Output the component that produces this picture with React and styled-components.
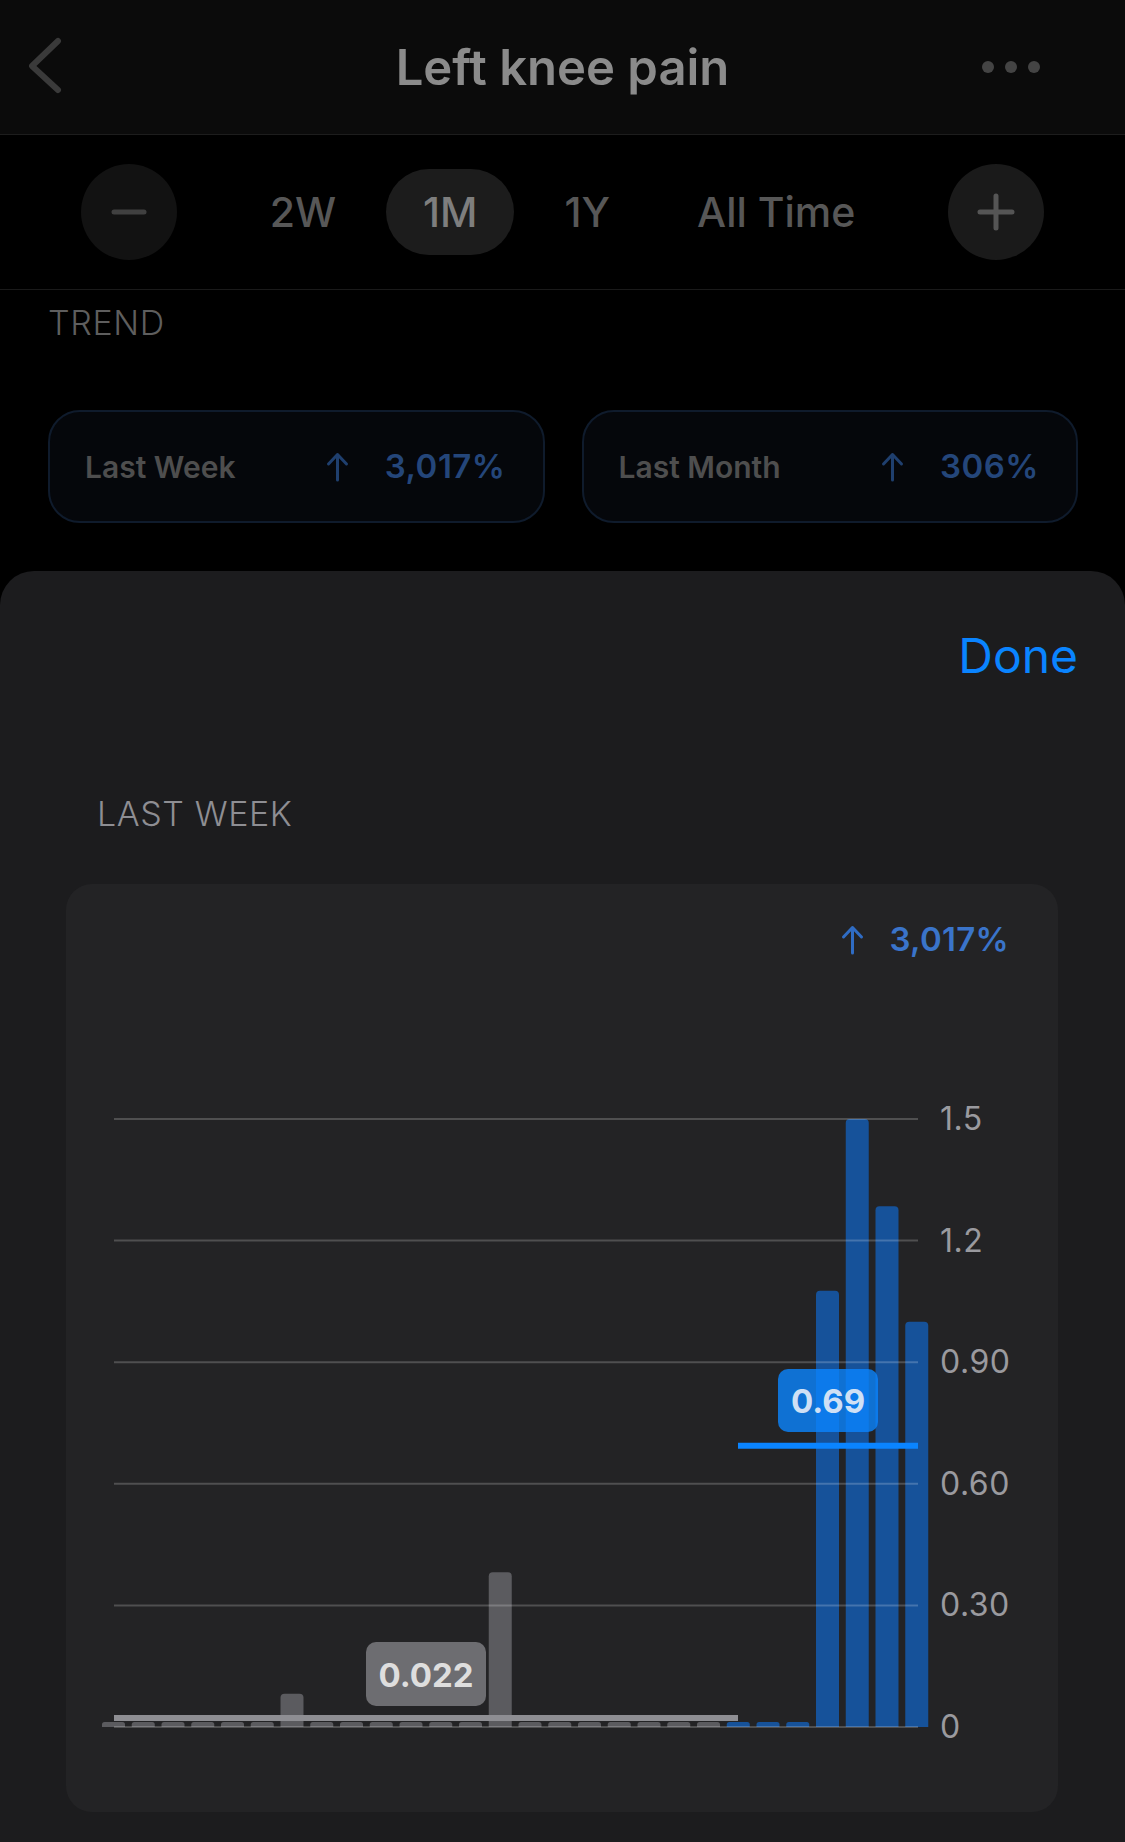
import React from 'react'
import styled, { createGlobalStyle } from 'styled-components'

const GlobalStyle = createGlobalStyle`
html, body {
  margin: 0;
  padding: 0;
  background: #000;
}
body {
  font-family: Inter, "Noto Sans", "Liberation Sans", sans-serif;
  -webkit-font-smoothing: antialiased;
}
`

const Screen = styled.div`
width: 1125px;
height: 1842px;
overflow: hidden;
display: flex;
flex-direction: column;
background: #000;
`

const NavBar = styled.header`
height: 134px;
background: #0b0b0b;
border-bottom: 1px solid #1d1d1d;
display: grid;
grid-template-columns: 1fr auto 1fr;
align-items: center;
padding: 0 85px 0 29px;
`

const NavTitle = styled.h1`
margin: 0 0 0 56px;
font-size: 49px;
line-height: 1;
font-weight: 600;
color: #8b8b8b;
`

const Dots = styled.div`
justify-self: end;
display: flex;
gap: 11px;
`

const Dot = styled.span`
width: 12px;
height: 12px;
border-radius: 50%;
background: #444;
`

const RangeBar = styled.div`
height: 154px;
border-bottom: 1px solid #1a1a1a;
display: flex;
align-items: center;
justify-content: center;
gap: 56px;
`

const RoundButton = styled.div`
width: 96px;
height: 96px;
border-radius: 50%;
background: ${({ $light }) => ($light ? '#1a1a1a' : '#121212')};
display: flex;
align-items: center;
justify-content: center;
`

const Segments = styled.div`
display: flex;
align-items: center;
gap: 13px;
`

const Segment = styled.div`
height: 86px;
padding: 0 37px;
border-radius: 43px;
display: flex;
align-items: center;
font-size: 41px;
font-weight: 500;
color: ${({ $active }) => ($active ? '#7e7e7e' : '#575757')};
background: ${({ $active }) => ($active ? '#1c1c1c' : 'transparent')};
`

const TrendSection = styled.section`
padding: 16px 47px 48px 48px;
`

const SectionLabel = styled.div`
font-size: 34px;
line-height: 1;
font-weight: 300;
letter-spacing: 0.6px;
color: ${({ $color }) => $color || '#5e5e5e'};
margin-left: ${({ $indent }) => $indent || 0}px;
`

const TrendCards = styled.div`
margin-top: 70px;
display: grid;
grid-template-columns: 1fr 1fr;
gap: 37px;
`

const TrendCard = styled.div`
height: 113px;
box-sizing: border-box;
border: 2px solid #0f1b2c;
border-radius: 32px;
background: #05070b;
display: flex;
align-items: center;
padding: 0 37px 0 35px;
`

const CardLabel = styled.span`
flex: 1;
font-size: 30px;
font-weight: 600;
color: #4e4e4e;
`

const Change = styled.span`
display: flex;
align-items: center;
gap: ${({ $gap }) => $gap || 32}px;
font-size: ${({ $size }) => $size || 30}px;
letter-spacing: ${({ $spacing }) => $spacing || 0}px;
line-height: 1;
font-weight: 600;
color: ${({ $color }) => $color};
`

const Sheet = styled.div`
flex: 1;
background: #1c1c1e;
border-radius: 34px 34px 0 0;
padding: 61px 47px 0 0;
display: flex;
flex-direction: column;
`

const DoneButton = styled.div`
align-self: flex-end;
font-size: 48px;
line-height: 1;
font-weight: 400;
color: #0a84ff;
`

const LabelRow = styled.div`
margin-top: 117px;
`

const ChartCard = styled.div`
margin: 53px 20px 0 66px;
background: #232325;
border-radius: 26px;
padding: 39px 0 48px;
`

const ChartHeader = styled.div`
display: flex;
justify-content: flex-end;
padding-right: 49px;
`

const ChartSvg = styled.svg`
display: block;
margin-top: 108px;
`

function ArrowUp({ color, width = 27, height = 30, stroke = 3 }) {
  return (
    <svg width={width} height={height} viewBox="0 0 27 30" fill="none">
      <path d="M13.5 28V3" stroke={color} strokeWidth={stroke} strokeLinecap="round" />
      <path d="M4.5 12L13.5 2.5L22.5 12" stroke={color} strokeWidth={stroke} strokeLinecap="round" strokeLinejoin="round" />
    </svg>
  )
}

// 28 days: 21 before last week (gray), 7 in last week (blue)
const values = [
  0, 0, 0, 0, 0, 0, 0.082, 0, 0, 0, 0, 0, 0, 0.382, 0, 0, 0, 0, 0, 0, 0,
  0, 0, 0, 1.076, 1.5, 1.285, 1.0,
]
const ticks = [
  { v: 0, label: '0' },
  { v: 0.3, label: '0.30' },
  { v: 0.6, label: '0.60' },
  { v: 0.9, label: '0.90' },
  { v: 1.2, label: '1.2' },
  { v: 1.5, label: '1.5' },
]

const X0 = 36
const PITCH = 29.75
const BW = 23
const BASE = 663
const UNIT = 405.33
const GRID_L = 48
const GRID_R = 852

const barPath = (x, h) => {
  const r = Math.min(4, h / 2)
  const top = BASE - h
  return `M${x} ${BASE} V${top + r} Q${x} ${top} ${x + r} ${top} H${x + BW - r} Q${x + BW} ${top} ${x + BW} ${top + r} V${BASE} Z`
}

function BarChart() {
  return (
    <ChartSvg width="992" height="700" viewBox="0 0 992 700">
      {values.map((v, i) => {
        const h = Math.max(5, v * UNIT)
        return (
          <path key={i} d={barPath(X0 + i * PITCH, h)} fill={i < 21 ? '#5b5b5f' : '#16529a'} />
        )
      })}
      {ticks.map((t) => {
        const y = BASE - t.v * UNIT
        return (
          <g key={t.label}>
            <line x1={GRID_L} x2={GRID_R} y1={y} y2={y} stroke="rgba(255,255,255,0.2)" strokeWidth="2" />
            <text x="874" y={y + 11} fontSize="32" letterSpacing="0.5" fill="#9a9a9f" fontFamily="Inter, sans-serif">
              {t.label}
            </text>
          </g>
        )
      })}
      <line x1={GRID_L} x2="672" y1={BASE - 0.022 * UNIT} y2={BASE - 0.022 * UNIT} stroke="#8e8e93" strokeWidth="6" />
      <line x1="672" x2={GRID_R} y1={BASE - 0.694 * UNIT} y2={BASE - 0.694 * UNIT} stroke="#0a84ff" strokeWidth="6" />

      <rect x="712" y="305" width="100" height="63" rx="10" fill="rgba(10,132,255,0.8)" />
      <text x="762" y="349" textAnchor="middle" fontSize="33" fontWeight="700" fill="#cfe0f5" fontFamily="Inter, sans-serif">
        0.69
      </text>

      <rect x="300" y="578" width="120" height="64" rx="10" fill="#6d6d71" />
      <text x="360" y="623" textAnchor="middle" fontSize="33" fontWeight="700" fill="#dedede" fontFamily="Inter, sans-serif">
        0.022
      </text>
    </ChartSvg>
  )
}

export default function App() {
  return (
    <>
      <GlobalStyle />
      <Screen>
        <NavBar>
          <svg width="40" height="60" viewBox="0 0 40 60" fill="none">
            <path d="M29 4L3 29L29 53" stroke="#3a3a3a" strokeWidth="6" strokeLinecap="round" strokeLinejoin="round" />
          </svg>
          <NavTitle>Left knee pain</NavTitle>
          <Dots>
            <Dot />
            <Dot />
            <Dot />
          </Dots>
        </NavBar>

        <RangeBar>
          <RoundButton>
            <svg width="36" height="6" viewBox="0 0 36 6">
              <path d="M3 3H33" stroke="#404040" strokeWidth="5" strokeLinecap="round" />
            </svg>
          </RoundButton>
          <Segments>
            <Segment>2W</Segment>
            <Segment $active>1M</Segment>
            <Segment>1Y</Segment>
            <Segment>All Time</Segment>
          </Segments>
          <RoundButton $light>
            <svg width="38" height="38" viewBox="0 0 38 38">
              <path d="M3 19H35M19 3V35" stroke="#555" strokeWidth="5" strokeLinecap="round" />
            </svg>
          </RoundButton>
        </RangeBar>

        <TrendSection>
          <SectionLabel>TREND</SectionLabel>
          <TrendCards>
            <TrendCard>
              <CardLabel>Last Week</CardLabel>
              <Change $color="#24467a" $gap={34} $size={33} $spacing={0.5}>
                <ArrowUp color="#1f3f6e" />
                3,017%
              </Change>
            </TrendCard>
            <TrendCard>
              <CardLabel>Last Month</CardLabel>
              <Change $color="#24467a" $gap={34} $size={33} $spacing={0.5}>
                <ArrowUp color="#1f3f6e" />
                306%
              </Change>
            </TrendCard>
          </TrendCards>
        </TrendSection>

        <Sheet>
          <DoneButton>Done</DoneButton>
          <LabelRow>
            <SectionLabel $color="#8e8e93" $indent={97}>LAST WEEK</SectionLabel>
          </LabelRow>
          <ChartCard>
            <ChartHeader>
              <Change $color="#3a74ca" $gap={23} $size={33} $spacing={0.3}>
                <ArrowUp color="#2f6cc4" />
                3,017%
              </Change>
            </ChartHeader>
            <BarChart />
          </ChartCard>
        </Sheet>
      </Screen>
    </>
  )
}
